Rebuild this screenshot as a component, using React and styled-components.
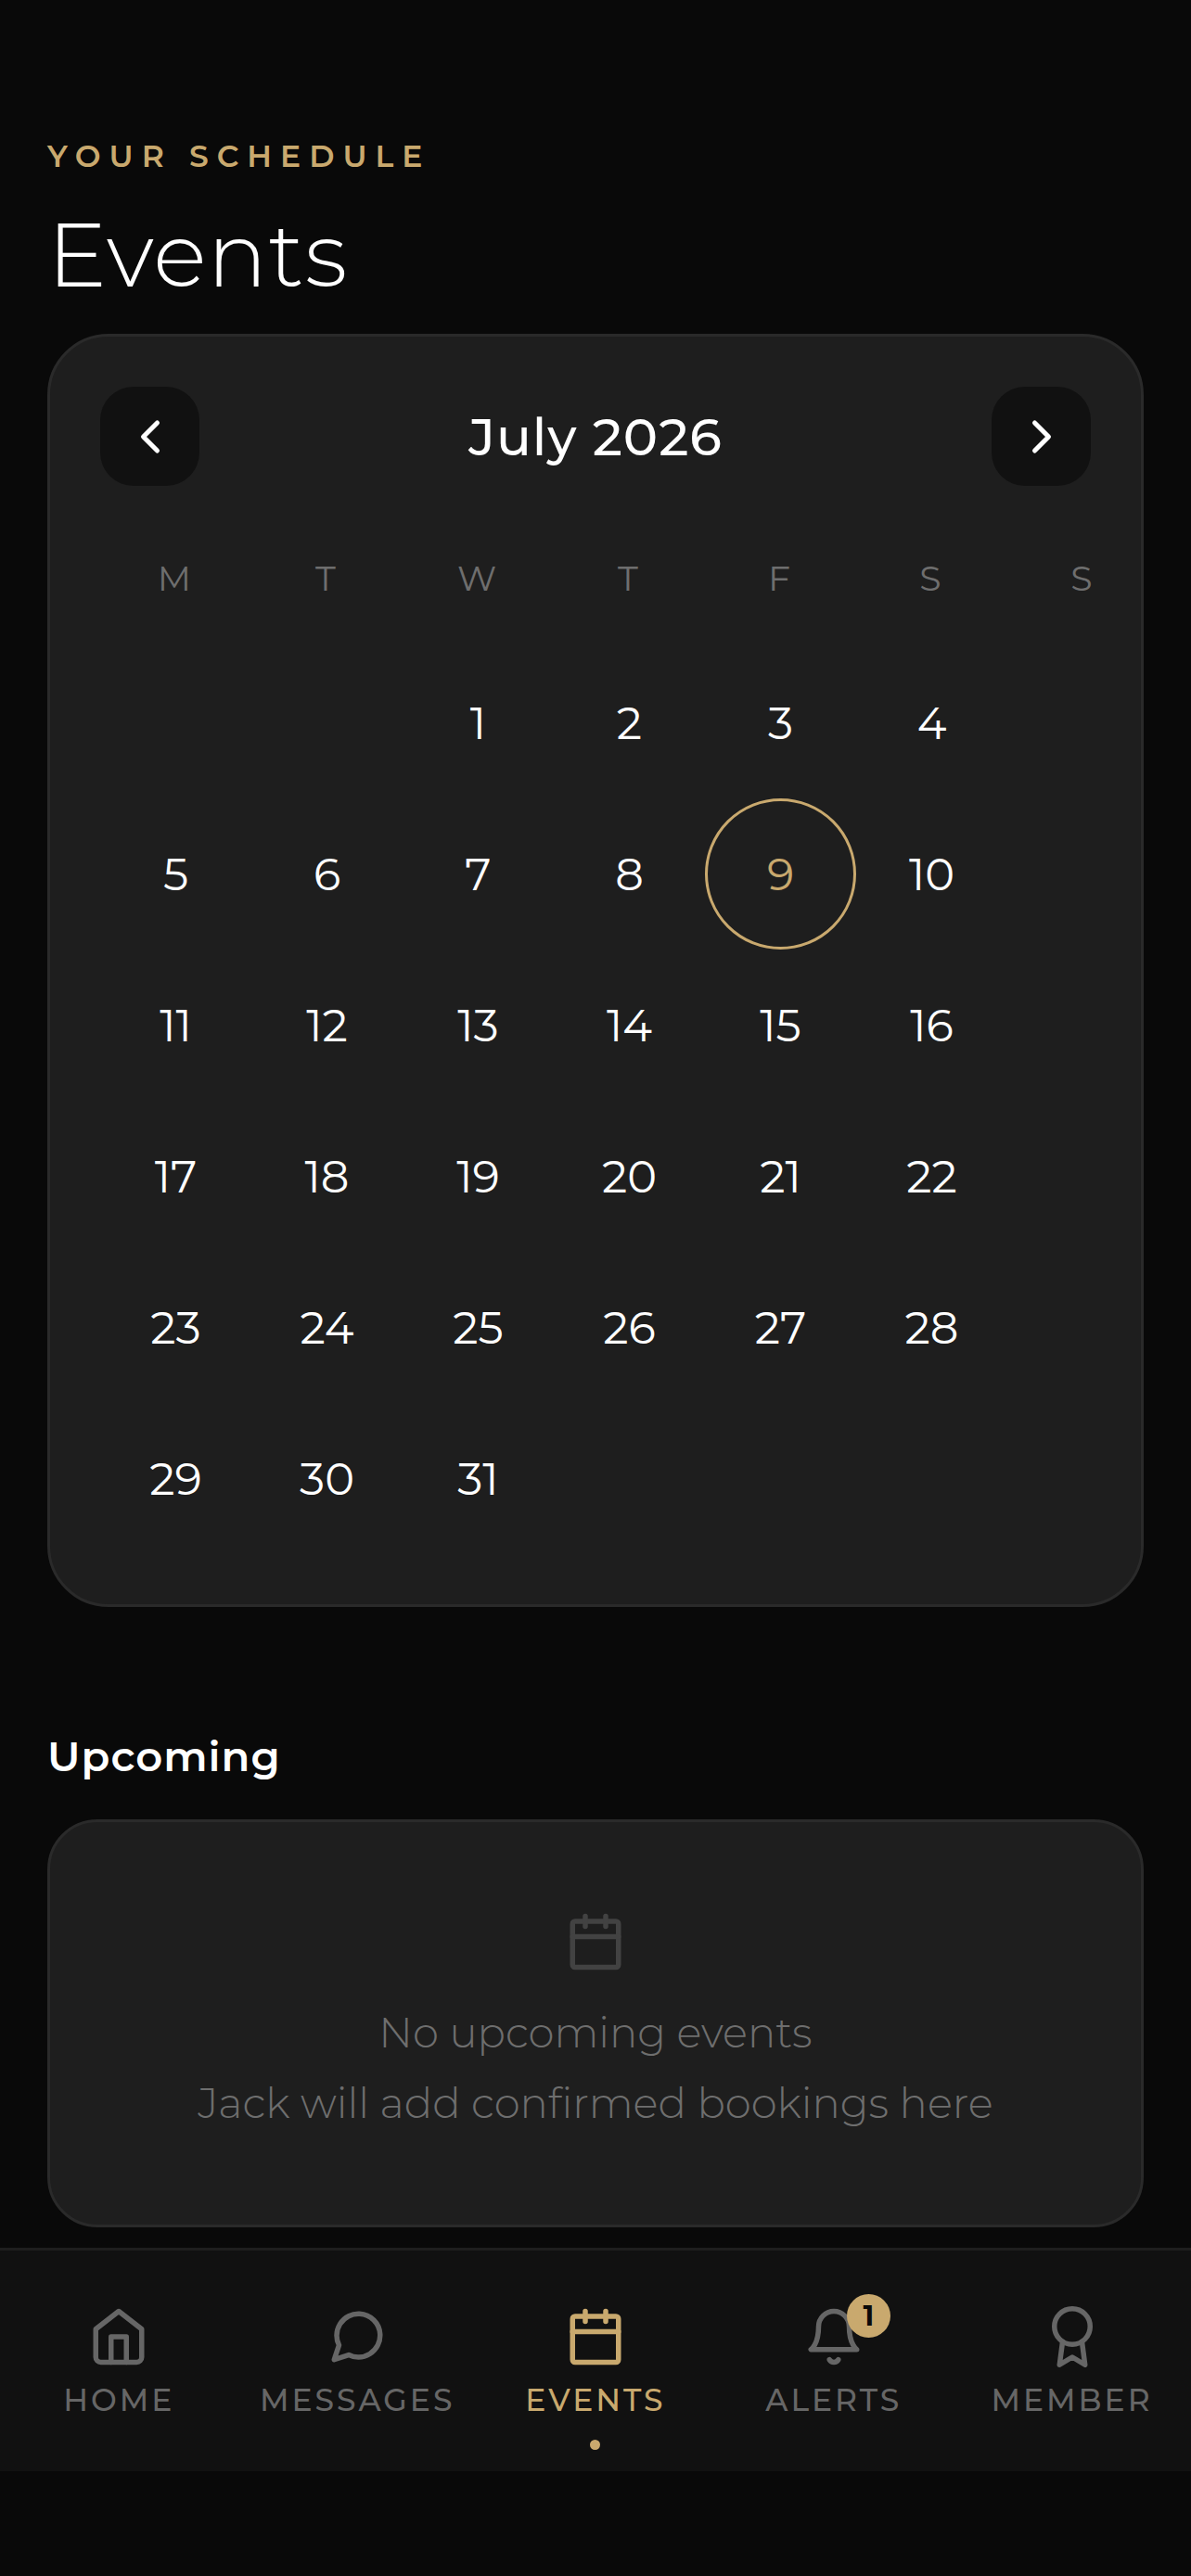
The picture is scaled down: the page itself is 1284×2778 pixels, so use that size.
import { useState } from "react";
import styled, { createGlobalStyle, ThemeProvider } from "styled-components";

const theme = {
  colors: {
    background: "#090909",
    surface: "#1e1e1e",
    bar: "#111111",
    border: "#2a2a2a",
    gold: "#c9a96e",
    text: "#ffffff",
    muted: "#666666",
    soft: "#6e6e6e",
    faint: "#424242",
  },
};

const weekDays = ["M", "T", "W", "T", "F", "S", "S"];
const leadingBlanks = 2;
const daysInMonth = 31;
const today = 9;

const tabs = [
  { id: "home", label: "Home", icon: HomeIcon },
  { id: "messages", label: "Messages", icon: MessageIcon },
  { id: "events", label: "Events", icon: CalendarIcon },
  { id: "alerts", label: "Alerts", icon: BellIcon, count: 1 },
  { id: "member", label: "Member", icon: AwardIcon },
];

function App() {
  const [activeTab, setActiveTab] = useState("events");
  const days = Array.from({ length: daysInMonth }, (_, i) => i + 1);

  return (
    <ThemeProvider theme={theme}>
      <GlobalStyle />
      <Page>
        <Content>
          <Eyebrow>YOUR SCHEDULE</Eyebrow>
          <Title>Events</Title>
          <CalendarCard>
            <MonthBar>
              <MonthButton type='button' aria-label='Previous month'>
                <Icon viewBox='0 0 24 24' $size={60}>
                  <path d='M15 18l-6-6 6-6' />
                </Icon>
              </MonthButton>
              <MonthName>July 2026</MonthName>
              <MonthButton type='button' aria-label='Next month'>
                <Icon viewBox='0 0 24 24' $size={60}>
                  <path d='M9 18l6-6-6-6' />
                </Icon>
              </MonthButton>
            </MonthBar>
            <WeekRow>
              {weekDays.map((day, i) => (
                <WeekDay key={i}>{day}</WeekDay>
              ))}
            </WeekRow>
            <DayGrid>
              {days.map(day => (
                <Day
                  key={day}
                  type='button'
                  $first={day === 1}
                  $today={day === today}
                >
                  {day}
                </Day>
              ))}
            </DayGrid>
          </CalendarCard>
          <SectionTitle>Upcoming</SectionTitle>
          <EmptyCard>
            <CalendarIcon />
            <EmptyText>
              No upcoming events
              <br />
              Jack will add confirmed bookings here
            </EmptyText>
          </EmptyCard>
        </Content>
        <TabBar>
          {tabs.map(({ id, label, icon: TabIcon, count }) => (
            <Tab
              key={id}
              type='button'
              $active={id === activeTab}
              onClick={() => setActiveTab(id)}
            >
              <IconBox>
                <TabIcon />
                {count && <Badge>{count}</Badge>}
              </IconBox>
              <TabLabel>{label}</TabLabel>
              <Dot $active={id === activeTab} />
            </Tab>
          ))}
        </TabBar>
      </Page>
    </ThemeProvider>
  );
}

function HomeIcon() {
  return (
    <Icon viewBox='0 0 24 24' $size={66}>
      <path d='M3 9l9-7 9 7v11a2 2 0 0 1-2 2H5a2 2 0 0 1-2-2z' />
      <path d='M9 22V12h6v10' />
    </Icon>
  );
}

function MessageIcon() {
  return (
    <Icon viewBox='0 0 24 24' $size={66}>
      <path d='M21 11.5a8.38 8.38 0 0 1-.9 3.8 8.5 8.5 0 0 1-7.6 4.7 8.38 8.38 0 0 1-3.8-.9L3 21l1.9-5.7a8.38 8.38 0 0 1-.9-3.8 8.5 8.5 0 0 1 4.7-7.6 8.38 8.38 0 0 1 3.8-.9h.5a8.48 8.48 0 0 1 8 8v.5z' />
    </Icon>
  );
}

function CalendarIcon() {
  return (
    <Icon viewBox='0 0 24 24' $size={66}>
      <rect x='3' y='4' width='18' height='18' rx='1' />
      <path d='M8 2v4M16 2v4M3 10h18' />
    </Icon>
  );
}

function BellIcon() {
  return (
    <Icon viewBox='0 0 24 24' $size={66}>
      <path d='M18 8A6 6 0 0 0 6 8c0 7-3 9-3 9h18s-3-2-3-9' />
      <path d='M13.73 21a2 2 0 0 1-3.46 0' />
    </Icon>
  );
}

function AwardIcon() {
  return (
    <Icon viewBox='0 0 24 24' $size={66}>
      <circle cx='12' cy='8' r='7' />
      <path d='M8.21 13.89L7 23l5-3 5 3-1.21-9.12' />
    </Icon>
  );
}

const GlobalStyle = createGlobalStyle`
  body {
    margin: 0;
    background-color: #090909;
    font-family: "Montserrat", "Inter", sans-serif;
    -webkit-font-smoothing: antialiased;
  }

  button {
    border: none;
    padding: 0;
    background: none;
    font-family: inherit;
    cursor: pointer;
  }
`;

const Page = styled.div`
  display: flex;
  flex-direction: column;
  box-sizing: border-box;
  min-height: 100vh;
  padding-bottom: 113px;
  color: ${props => props.theme.colors.text};
`;

const Content = styled.main`
  flex: 1;
  padding: 144px 51px 22px;
`;

const Eyebrow = styled.p`
  margin: 0;
  font-size: 33px;
  line-height: 48px;
  font-weight: 600;
  letter-spacing: 9px;
  color: ${props => props.theme.colors.gold};
`;

const Title = styled.h1`
  margin: 23px 0 25px;
  font-size: 96px;
  line-height: 120px;
  font-weight: 300;
  letter-spacing: 1px;
`;

const Card = styled.section`
  background-color: ${props => props.theme.colors.surface};
  border: 3px solid ${props => props.theme.colors.border};
`;

const CalendarCard = styled(Card)`
  padding: 54px;
  border-radius: 66px;
`;

const MonthBar = styled.div`
  display: flex;
  align-items: center;
  justify-content: space-between;
  margin-bottom: 72px;
`;

const MonthButton = styled.button`
  display: flex;
  align-items: center;
  justify-content: center;
  width: 107px;
  height: 107px;
  border-radius: 36px;
  color: ${props => props.theme.colors.text};
  background-color: ${props => props.theme.colors.bar};
`;

const MonthName = styled.h2`
  margin: 0;
  font-size: 56px;
  line-height: 66px;
  font-weight: 500;
  letter-spacing: 1px;
`;

/* the columns run a little past the right padding of the card */
const WeekRow = styled.div`
  display: grid;
  grid-template-columns: repeat(7, 1fr);
  margin: 0 -73px 46px 0;
`;

const WeekDay = styled.span`
  font-size: 38px;
  line-height: 56px;
  font-weight: 400;
  letter-spacing: 3px;
  text-align: center;
  color: ${props => props.theme.colors.soft};
`;

const DayGrid = styled.div`
  display: grid;
  grid-template-columns: repeat(6, 1fr);
  margin-right: 90px;
`;

const Day = styled.button`
  grid-column-start: ${props => (props.$first ? leadingBlanks + 1 : "auto")};
  aspect-ratio: 1;
  box-sizing: border-box;
  border: 3px solid
    ${props => (props.$today ? props.theme.colors.gold : "transparent")};
  border-radius: 50%;
  font-size: 48px;
  font-weight: 400;
  color: ${props =>
    props.$today ? props.theme.colors.gold : props.theme.colors.text};
`;

const SectionTitle = styled.h2`
  margin: 131px 0 38px;
  font-size: 45px;
  line-height: 60px;
  font-weight: 600;
  letter-spacing: 1px;
`;

const EmptyCard = styled(Card)`
  display: flex;
  flex-direction: column;
  align-items: center;
  gap: 27px;
  padding: 96px 54px 93px;
  border-radius: 54px;
  color: ${props => props.theme.colors.faint};
`;

const EmptyText = styled.p`
  margin: 0;
  font-size: 45px;
  line-height: 76px;
  font-weight: 300;
  text-align: center;
  color: ${props => props.theme.colors.soft};
`;

const TabBar = styled.nav`
  display: grid;
  grid-template-columns: repeat(5, 1fr);
  padding: 60px 0 23px;
  border-top: 3px solid ${props => props.theme.colors.surface};
  background-color: ${props => props.theme.colors.bar};
`;

const Tab = styled.button`
  display: flex;
  flex-direction: column;
  align-items: center;
  color: ${props =>
    props.$active ? props.theme.colors.gold : props.theme.colors.muted};
`;

const IconBox = styled.span`
  position: relative;
  display: flex;
`;

const Icon = styled.svg`
  display: block;
  width: ${props => props.$size}px;
  height: ${props => props.$size}px;
  fill: none;
  stroke: currentColor;
  stroke-width: 2;
  stroke-linecap: round;
  stroke-linejoin: round;
`;

const Badge = styled.span`
  position: absolute;
  top: -13px;
  right: -28px;
  width: 47px;
  height: 47px;
  border-radius: 50%;
  font-size: 30px;
  line-height: 47px;
  font-weight: 700;
  color: ${props => props.theme.colors.background};
  background-color: ${props => props.theme.colors.gold};
`;

const TabLabel = styled.span`
  margin: 14px 0 22px;
  font-size: 33px;
  line-height: 42px;
  font-weight: 500;
  letter-spacing: 3px;
  text-transform: uppercase;
`;

const Dot = styled.span`
  width: 11px;
  height: 11px;
  border-radius: 50%;
  background-color: ${props =>
    props.$active ? props.theme.colors.gold : "transparent"};
`;

export default App;
